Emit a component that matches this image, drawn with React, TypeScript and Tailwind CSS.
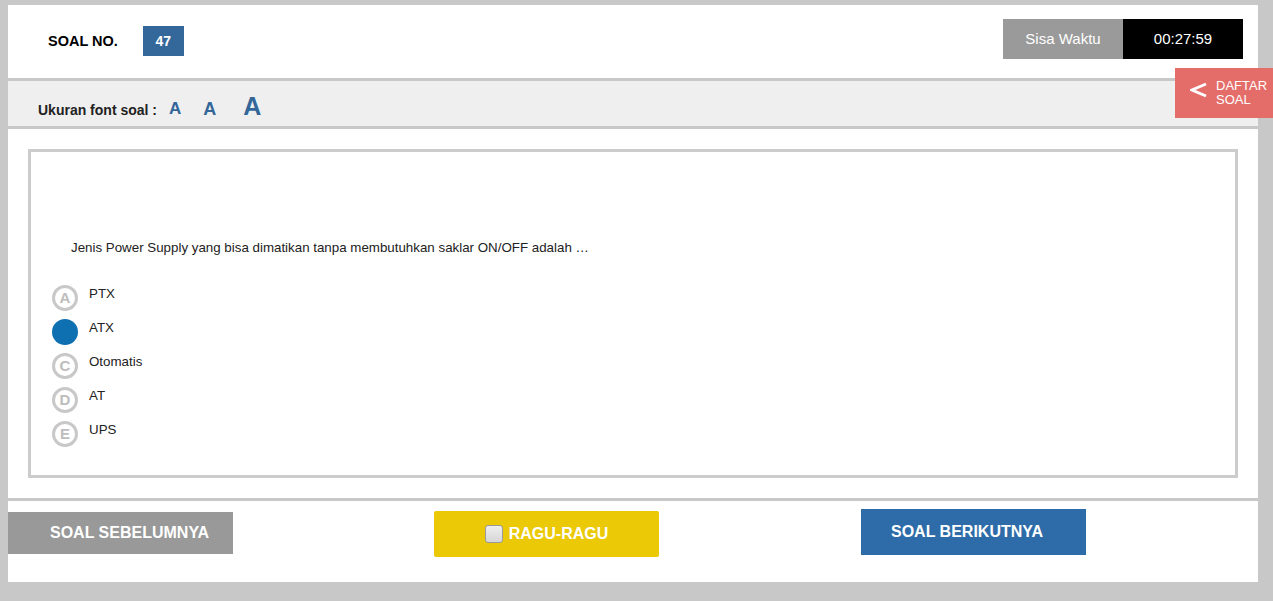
import { useState } from 'react';

const options = [
  { key: 'A', label: 'PTX' },
  { key: 'B', label: 'ATX' },
  { key: 'C', label: 'Otomatis' },
  { key: 'D', label: 'AT' },
  { key: 'E', label: 'UPS' },
];

export default function App() {
  const [picked, setPicked] = useState('B');

  return (
    <div
      className="relative min-h-screen bg-[#c8c8c8] pt-[5px] pl-[8px] pr-[15px] pb-[19px]"
      style={{ fontFamily: '"Liberation Sans", Arial, sans-serif' }}
    >
      <div className="bg-white">
        {/* header */}
        <div className="flex h-[76px] justify-between border-b-[3px] border-[#c8c8c8] pl-[40px] pr-[15px]">
          <div className="flex items-start">
            <span className="mt-[26px] text-[14.5px] font-bold text-black">SOAL NO.</span>
            <span className="ml-[25px] mt-[21px] flex h-[30px] w-[41px] items-center justify-center bg-[#34679a] text-[14px] font-bold text-white">
              47
            </span>
          </div>
          <div className="mt-[14px] flex h-[40px]">
            <div className="flex w-[120px] items-center justify-center bg-[#9a9a9a] text-[15px] text-white">
              Sisa Waktu
            </div>
            <div className="flex w-[120px] items-center justify-center bg-black text-[15px] text-white">
              00:27:59
            </div>
          </div>
        </div>

        {/* font size bar */}
        <div className="flex h-[48px] items-end border-b-[3px] border-[#c8c8c8] bg-[#efefef] pb-[8px] pl-[30px]">
          <span className="text-[14px] font-bold leading-[16px] text-[#222]">Ukuran font soal :</span>
          <button className="ml-[12px] text-[17px] font-bold leading-[18px] text-[#336699]">A</button>
          <button className="ml-[22px] text-[18px] font-bold leading-[18px] text-[#336699]">A</button>
          <button className="ml-[27px] text-[25px] font-bold leading-[24px] text-[#336699]">A</button>
        </div>

        {/* question */}
        <div className="p-[20px]">
          <div className="border-[3px] border-[#cccccc] pb-[28px]">
            <p className="pl-[40px] pt-[88px] text-[13.33px] leading-[16px] text-[#222]">
              Jenis Power Supply yang bisa dimatikan tanpa membutuhkan saklar ON/OFF adalah …
            </p>
            <div className="mt-[29px] flex flex-col gap-[8px] pl-[21px]">
              {options.map((o) => (
                <label key={o.key} className="flex cursor-pointer items-start" onClick={() => setPicked(o.key)}>
                  {picked === o.key ? (
                    <span className="h-[26px] w-[26px] rounded-full bg-[#0e70b0]" />
                  ) : (
                    <span className="flex h-[26px] w-[26px] items-center justify-center rounded-full border-[3px] border-[#c8c8c8] text-[15px] font-bold text-[#bdbdbd]">
                      {o.key}
                    </span>
                  )}
                  <span className="ml-[11px] mt-[1px] text-[13.33px] leading-[16px] text-[#222]">{o.label}</span>
                </label>
              ))}
            </div>
          </div>
        </div>

        {/* footer */}
        <div className="flex h-[84px] items-start border-t-[3px] border-[#c8c8c8]">
          <button className="mt-[11px] flex h-[42px] w-[225px] items-center bg-[#999999] pl-[42px] text-[16px] font-bold text-white">
            SOAL SEBELUMNYA
          </button>
          <button className="ml-[201px] mt-[10px] flex h-[46px] w-[225px] items-center justify-center gap-[6px] rounded-[2px] bg-[#ebc907] text-[16px] font-bold text-white">
            <span className="h-[18px] w-[18px] rounded-[3px] border border-[#9a9a9a] bg-gradient-to-b from-[#eeeeee] to-[#d6d6d6]" />
            RAGU-RAGU
          </button>
          <button className="ml-[202px] mt-[8px] flex h-[46px] w-[225px] items-center bg-[#2d6ca8] pl-[30px] text-[16px] font-bold text-white">
            SOAL BERIKUTNYA
          </button>
        </div>
      </div>

      {/* daftar soal tab */}
      <button className="absolute right-0 top-[68px] flex h-[50px] w-[98px] items-center bg-[#e46d69] pl-[15px] text-white">
        <svg width="17" height="16" viewBox="0 0 17 16" className="mt-[-6px]">
          <polyline points="16,2 2,8 16,14" fill="none" stroke="white" strokeWidth="2.8" />
        </svg>
        <span className="ml-[9px] text-left text-[13px] leading-[14px]">
          DAFTAR
          <br />
          SOAL
        </span>
      </button>
    </div>
  );
}
